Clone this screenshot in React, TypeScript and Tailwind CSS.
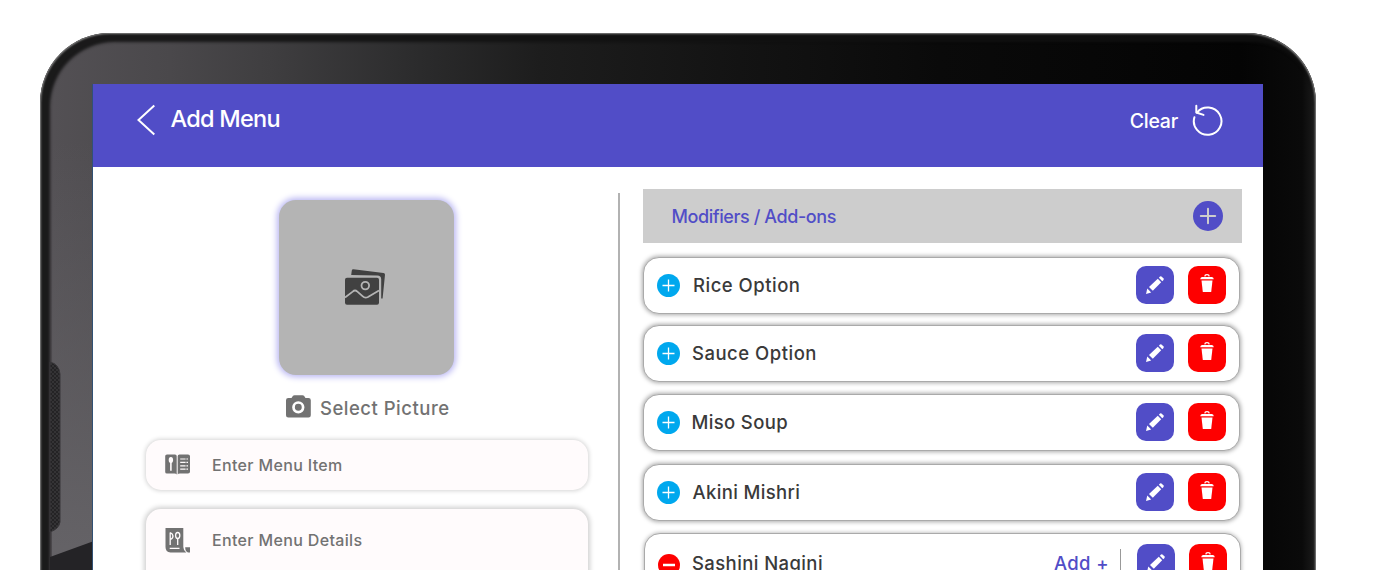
import React from "react";

function Pencil() {
  return (
    <svg width="20" height="20" viewBox="0 0 20 20" fill="#fff">
      <path d="M1 19 L2.3 13.6 L6.2 17.4 Z" />
      <path d="M4 12 L12.8 3.8 L16.2 7.2 L7.8 15.8 Z" />
      <path d="M13.9 2.8 L15 1.6 Q15.9 0.9 16.8 1.7 L18.3 3.2 Q19.1 4.1 18.5 5 L17.3 6.2 Z" />
    </svg>
  );
}

function Trash() {
  return (
    <svg width="14" height="18" viewBox="0 0 14 18">
      <path d="M4.8 2.4 Q4.9 0.7 7 0.7 Q9.1 0.7 9.2 2.4" fill="none" stroke="#fff" strokeWidth="1.3" />
      <path d="M2 3 H12 Q13.7 3.4 13.7 5.3 H0.3 Q0.3 3.4 2 3 Z" fill="#fff" />
      <path d="M1.5 6.5 H12.5 L11.2 18 H2.8 Z" fill="#fff" />
    </svg>
  );
}

function Actions() {
  return (
    <div className="flex gap-3.5">
      <button className="flex h-[38px] w-[38px] items-center justify-center rounded-[10px] bg-[#514dc7]">
        <Pencil />
      </button>
      <button className="flex h-[38px] w-[38px] justify-center rounded-[10px] bg-[#fe0000] pt-2">
        <Trash />
      </button>
    </div>
  );
}

const rows = [
  { name: "Rice Option", gap: "mb-[11px]", text: "pl-[13px] tracking-[0.5px]" },
  { name: "Sauce Option", gap: "mb-[12px]", text: "pl-[12px] tracking-[0.5px]" },
  { name: "Miso Soup", gap: "mb-[13px]", text: "pl-[11.5px] tracking-[0.35px]" },
  { name: "Akini Mishri", gap: "mb-[12px]", text: "pl-[12.5px] tracking-[0.35px]" },
];

export default function App() {
  return (
    <div className="flex h-[570px] w-[1380px] overflow-hidden bg-white pl-10 pt-[33px] font-['Inter',sans-serif]">
      <div className="relative h-[620px] w-[1276px] shrink-0 rounded-t-[70px] bg-[linear-gradient(90deg,#545155_0,#4a484b_130px,#3f3e40_230px,#2b2b2c_380px,#1d1d1d_500px,#131313_700px,#0a0a0a_900px,#040404_1200px,#0a0a0a_1262px,#161616_1271px,#222_1276px)] pl-[53px] pt-[51px] shadow-[inset_0_0_2px_1px_#888,inset_5px_4px_3px_5px_rgba(16,17,17,0.85)]">
        <svg className="absolute left-0 top-0" width="54" height="537" viewBox="0 0 54 537">
          <defs>
            <pattern id="mesh" width="4" height="4" patternUnits="userSpaceOnUse">
              <rect width="4" height="4" fill="#242325" />
              <circle cx="1" cy="1" r="0.9" fill="#3b3a3c" />
              <circle cx="3" cy="3" r="0.9" fill="#3b3a3c" />
            </pattern>
            <linearGradient id="side" x1="0" y1="0" x2="0" y2="1">
              <stop offset="0" stopColor="#656367" stopOpacity="0" />
              <stop offset="1" stopColor="#656367" />
            </linearGradient>
          </defs>
          <path d="M12 110 H54 V537 H12 Z" fill="url(#side)" />
          <path d="M10 329 Q19 331 20 341 V489 Q19 496 10 499 Z" fill="url(#mesh)" stroke="#39373a" strokeWidth="1" />
          <path d="M10 524 L54 508 V537 H10 Z" fill="#242326" />
        </svg>
        <div className="relative w-[1170px] bg-white shadow-[-1px_0_0_#315174]">
          <header className="flex h-[83px] justify-between bg-[#514dc7] pl-[44px] pr-[39px] text-white">
            <div className="flex pt-[20px]">
              <svg width="20" height="32" viewBox="0 0 20 32" fill="none" stroke="#fff" strokeWidth="2">
                <path d="M17.3 1.5 L1.5 16 L17.3 30.5" />
              </svg>
              <h1 className="pl-[13.5px] text-[23.5px] font-medium leading-[30px] tracking-[-0.75px]">Add Menu</h1>
            </div>
            <div className="flex pt-[20px]">
              <span className="pr-[14px] pt-[3px] text-[19.5px] font-medium leading-[28px] tracking-[-0.25px]">Clear</span>
              <svg width="32" height="32" viewBox="0 0 32 32" fill="none" stroke="#fff" strokeWidth="2" strokeLinecap="round" strokeLinejoin="round">
                <path d="M2.4 13.3 A13.8 13.6 0 1 0 4.9 8.6" />
                <path d="M4.3 1.8 V8.5 L11.5 10.9" />
              </svg>
            </div>
          </header>
          <main className="flex h-[460px]">
            <section className="flex w-[525px] flex-col items-start pl-[53px] pt-[33px]">
              <div className="ml-[133px] flex h-[175px] w-[175px] items-center justify-center rounded-[17px] bg-[#b4b4b4] shadow-[0_0_6px_2px_#b8b5f2]">
                <svg className="-ml-1 -mt-0.5" width="42" height="38" viewBox="0 0 42 38">
                  <path d="M7.2 7 L7.8 2.6 Q8 1.2 9.4 1.3 L39.5 5 Q41 5.3 41 6.8 L38.6 30.6 H37.2 V11 Q37 7.6 33.5 7.4 Z" fill="#414141" />
                  <rect x="1" y="9.7" width="34" height="27" rx="2" fill="#414141" />
                  <circle cx="21.3" cy="17.6" r="3.8" fill="none" stroke="#b4b4b4" strokeWidth="1.8" />
                  <path d="M1 29.5 L8.7 23.6 Q11 21.5 13.4 23.6 L18.5 28.2 Q21 30.6 24 29 L35 22.4" fill="none" stroke="#b4b4b4" strokeWidth="1.8" />
                </svg>
              </div>
              <div className="ml-[140px] mt-[18px] flex h-[26px] items-center text-[#727272]">
                <svg width="26" height="23" viewBox="0.5 0 26 23">
                  <path d="M6 3 L7.5 0.8 Q8 0.2 9 0.2 H17 Q18 0.2 18.5 0.8 L20 3 H23 Q25.3 3 25.3 5.3 V20.3 Q25.3 22.6 23 22.6 H2.8 Q0.5 22.6 0.5 20.3 V5.3 Q0.5 3 2.8 3 Z" fill="#727272" />
                  <circle cx="12.8" cy="12.3" r="4.8" fill="none" stroke="#fff" strokeWidth="2.7" />
                </svg>
                <span className="pl-2 pt-[3px] text-[18.5px] font-[450] leading-[26px] tracking-[0.5px]">Select Picture</span>
              </div>
              <div className="mt-[21px] flex h-[50px] w-[442px] items-center rounded-[15px] bg-[#fffbfc] pl-[19px] text-[#727272] shadow-[0_0_4px_1px_#d5d5d5]">
                <svg className="-mt-0.5" width="26" height="21" viewBox="0 0 26 21">
                  <path d="M2 0.5 H10 Q11.7 0.5 11.7 2 V20.5 Q11 19.5 9.5 19.5 H2 Q0.2 19.5 0.2 18 V2 Q0.2 0.5 2 0.5 Z M14.5 0.5 H23 Q25 0.5 25 2.3 V17.8 Q25 19.5 23 19.5 H15 Q13 19.5 12.7 20.5 V2.3 Q12.7 0.5 14.5 0.5 Z" fill="#727272" />
                  <ellipse cx="5.9" cy="6" rx="2.2" ry="2.9" fill="#fffbfc" />
                  <path d="M5.9 7 V16.8" stroke="#fffbfc" strokeWidth="1.6" />
                  <path d="M15.2 5 H23 M15.2 8.4 H23 M15.2 11.8 H23 M15.2 15.2 H23" stroke="#fffbfc" strokeWidth="1.2" strokeDasharray="5.4 0.8" />
                </svg>
                <span className="pl-[21px] text-[16px] font-[450] tracking-[0.35px]">Enter Menu Item</span>
              </div>
              <div className="mt-[19px] flex h-[100px] w-[442px] items-start rounded-[15px] bg-[#fffbfc] pl-[19px] pt-[18px] text-[#727272] shadow-[0_0_5px_2px_#d0d0d0]">
                <svg width="26" height="26" viewBox="0 0 26 26">
                  <path d="M0.5 1 H18.3 V20 Q18.3 23.3 21.3 25.5 H5.5 Q0.5 25 0.5 20 Z" fill="#727272" />
                  <path d="M20.2 20.2 H25 V25.5 H23 Q20.2 24.5 20.2 20.2 Z" fill="#727272" />
                  <path d="M5.2 5.5 V18 M5.2 5.5 Q8 7 8 9 Q8 11.5 5.2 12.5 M12.7 11.5 V18 M4.7 21.3 H14.5" fill="none" stroke="#fffbfc" strokeWidth="1.3" />
                  <ellipse cx="12.7" cy="8.5" rx="2.1" ry="3" fill="none" stroke="#fffbfc" strokeWidth="1.3" />
                </svg>
                <span className="pl-[21px] pt-px text-[16px] font-[450] tracking-[0.35px]">Enter Menu Details</span>
              </div>
            </section>
            <div className="mt-[26px] w-0.5 bg-[#b2b2b2]" />
            <section className="flex flex-col items-start pl-[23px] pt-[22px]">
              <div className="mb-[14px] flex h-[54px] w-[599px] items-center justify-between bg-[#cdcdcd] pl-[28.5px] pr-[19px]">
                <h2 className="text-[18px] font-medium tracking-[-0.42px] text-[#514dc7]">Modifiers / Add-ons</h2>
                <svg width="30" height="30" viewBox="0 0 30 30">
                  <circle cx="15" cy="15" r="15" fill="#514dc7" />
                  <path d="M15 7.8 V22.2 M7.8 15 H22.2" stroke="#cdcdcd" strokeWidth="2" strokeLinecap="round" />
                </svg>
              </div>
              {rows.map((row) => (
                <div key={row.name} className={`flex h-[57px] w-[597px] items-start justify-between rounded-[16px] border border-[#aaa] bg-white pl-[13px] pr-[13px] pt-2 shadow-[0_0_4px_1px_#aaa] ${row.gap}`}>
                  <div className="flex h-[39px] items-center">
                    <svg width="23" height="23" viewBox="0 0 23 23">
                      <circle cx="11.5" cy="11.5" r="11.5" fill="#00a8ee" />
                      <path d="M11.5 5.5 V17.5 M5.5 11.5 H17.5" stroke="#fff" strokeWidth="1.3" />
                    </svg>
                    <span className={`text-[18.5px] font-[450] text-[#3a3a3a] ${row.text}`}>{row.name}</span>
                  </div>
                  <Actions />
                </div>
              ))}
              <div className="ml-px flex h-[90px] w-[597px] items-start justify-between rounded-[16px] border border-[#aaa] bg-white pl-[13px] pr-[13px] pt-[10px] shadow-[0_0_4px_0px_#aaa]">
                <div className="flex pt-[5px]">
                  <svg className="mt-[5px]" width="22" height="22" viewBox="0 0 22 22">
                    <circle cx="11" cy="11" r="11" fill="#fe0000" />
                    <path d="M5 11 H17" stroke="#fff" strokeWidth="2.5" />
                  </svg>
                  <span className="pl-[12px] text-[18.5px] font-[450] leading-[28px] tracking-[0.4px] text-[#3a3a3a]">Sashini Nagini</span>
                </div>
                <div className="flex">
                  <span className="pt-[5px] text-[18.5px] font-[450] leading-[28px] tracking-[0.4px] text-[#514dc7]">Add +</span>
                  <div className="ml-[11px] mr-[16px] mt-[5px] h-8 w-px bg-[#999]" />
                  <Actions />
                </div>
              </div>
            </section>
          </main>
        </div>
      </div>
    </div>
  );
}
